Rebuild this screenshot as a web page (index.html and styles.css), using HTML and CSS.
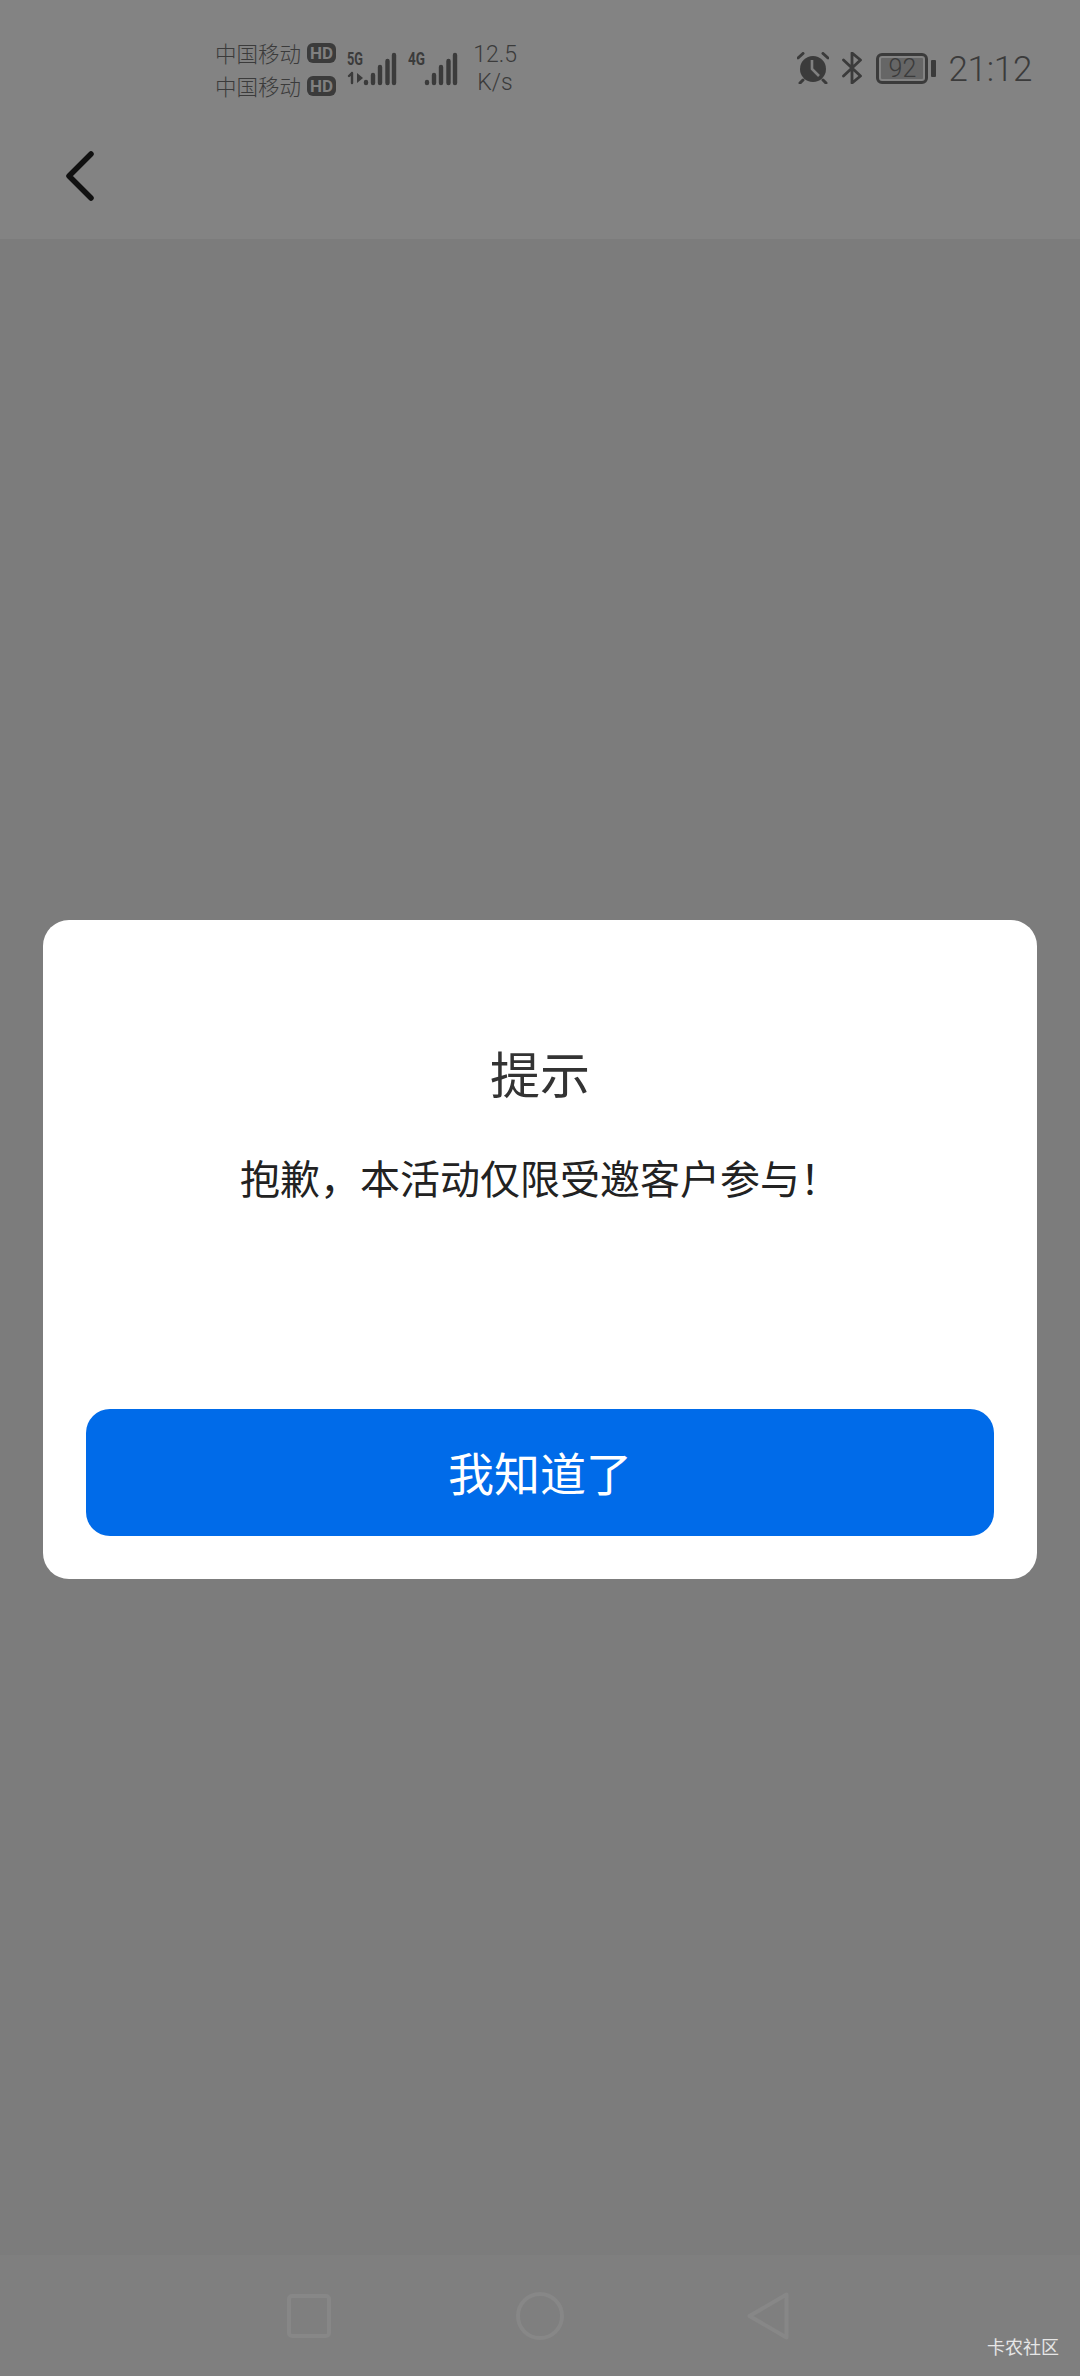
FILE: index.html
```html
<!DOCTYPE html>
<html lang="zh-CN">
<head>
<meta charset="utf-8">
<title>提示</title>
<link rel="stylesheet" href="styles.css">
</head>
<body>
<div class="page">
  <header class="top">
    <div class="status">
      <div class="status-left">
        <div class="carriers">
          <div class="carrier"><span>中国移动</span><b class="hd">HD</b></div>
          <div class="carrier"><span>中国移动</span><b class="hd">HD</b></div>
        </div>
        <svg class="signal-a" width="52" height="42" viewBox="0 -6 52 42">
          <text x="0" y="15" class="net" textLength="16" lengthAdjust="spacingAndGlyphs">5G</text>
          <g fill="none" stroke="#3b3b3b" stroke-width="2.4" stroke-linecap="round" stroke-linejoin="round">
            <path d="M5 23V33M2 26L5 23"/>
          </g>
          <path d="M10 23L16 28L10 33Z" fill="#3b3b3b"/>
          <g stroke="#3b3b3b" stroke-width="4.4" stroke-linecap="round">
            <path d="M19 32V33M26 25V33M33 17V33M40.5 11V33M47 5V33"/>
          </g>
        </svg>
        <svg class="signal-b" width="52" height="42" viewBox="0 -6 52 42">
          <text x="0" y="15" class="net" textLength="17" lengthAdjust="spacingAndGlyphs">4G</text>
          <g stroke="#3b3b3b" stroke-width="4.4" stroke-linecap="round">
            <path d="M19 32V33M26 25V33M33 17V33M40.5 11V33M47 5V33"/>
          </g>
        </svg>
        <div class="speed"><span>12.5</span><span>K/s</span></div>
      </div>
      <div class="status-right">
        <svg class="alarm" width="32" height="32" viewBox="0 0 32 32">
          <circle cx="16" cy="17" r="13" fill="#3b3b3b"/>
          <path d="M15 8V17L22 24" fill="none" stroke="#808080" stroke-width="2.6"/>
          <path d="M1 6L6 1.5M31 6L26 1.5M6 28L3 31M26 28L29 31" stroke="#3b3b3b" stroke-width="3" stroke-linecap="round" fill="none"/>
        </svg>
        <svg class="bt" width="21" height="32" viewBox="0 0 21 32">
          <path d="M1.5 8L18.5 24L10 31V1L18.5 8L1.5 24" fill="none" stroke="#3b3b3b" stroke-width="2.8" stroke-linecap="round" stroke-linejoin="round"/>
        </svg>
        <div class="battery-wrap">
          <div class="battery"><span class="level">92</span></div>
          <i class="cap"></i>
        </div>
        <span class="time">21:12</span>
      </div>
    </div>
    <div class="nav">
      <svg width="32" height="50" viewBox="0 0 32 50">
        <path d="M27 3L5 25L27 47" fill="none" stroke="#111" stroke-width="5.5" stroke-linecap="round" stroke-linejoin="round"/>
      </svg>
    </div>
  </header>
  <main class="body"></main>
  <footer class="sysnav">
    <svg class="key-square" width="44" height="44" viewBox="0 0 44 44"><rect x="2" y="2" width="40" height="40" rx="3" fill="none" stroke="#878787" stroke-width="4"/></svg>
    <svg class="key-circle" width="48" height="48" viewBox="0 0 48 48"><circle cx="24" cy="24" r="22" fill="none" stroke="#878787" stroke-width="4"/></svg>
    <svg class="key-back" width="42" height="48" viewBox="0 0 42 48"><path d="M39.5 2.5V45.5L2.5 24Z" fill="none" stroke="#878787" stroke-width="4" stroke-linejoin="round"/></svg>
  </footer>
  <div class="dialog">
    <h1 class="title">提示</h1>
    <p class="message">抱歉，本活动仅限受邀客户参与！</p>
    <button class="confirm">我知道了</button>
  </div>
  <span class="watermark">卡农社区</span>
</div>
</body>
</html>
```
FILE: styles.css
```css
* { box-sizing: border-box; }
html, body { margin: 0; padding: 0; }
body { font-family: "Noto Sans CJK SC", "Noto Sans", sans-serif; background: #7c7c7c; }
.page { position: relative; width: 1080px; height: 2376px; display: flex; flex-direction: column; background: #7c7c7c; overflow: hidden; }
.top { height: 239px; background: #838383; flex: none; }
.status { height: 130px; display: flex; justify-content: space-between; padding: 36px 48px 0 215px; color: #3b3b3b; }
.status-left { display: flex; align-items: flex-start; }
.carriers { display: flex; flex-direction: column; }
.carrier { display: flex; align-items: center; gap: 6px; height: 33px; font-size: 21.5px; font-weight: 300; line-height: 33px; }
.hd { display: inline-block; width: 29px; height: 20px; border-radius: 6px; background: #3b3b3b; color: #808080; font: 700 17px/20px "Roboto", sans-serif; text-align: center; }
.signal-a { margin: 8px 0 0 11px; flex: none; }
.signal-b { margin: 8px 0 0 9px; flex: none; }
.net { font: 700 18px "Roboto", sans-serif; fill: #3b3b3b; }
.speed { display: flex; flex-direction: column; align-items: center; width: 48px; margin: 5px 0 0 11px; font: 300 23px/28px "Roboto", sans-serif; }
.status-right { display: flex; align-items: center; height: 40px; margin-top: 12px; }
.alarm { margin-right: 13px; }
.bt { margin-right: 13px; }
.battery-wrap { display: flex; align-items: center; margin-right: 12px; }
.battery { width: 52px; height: 31px; padding: 2px; border: 3px solid #3b3b3b; border-radius: 6px; }
.level { display: block; width: 100%; height: 100%; background: #666; font: 300 25px/21px "Roboto", sans-serif; text-align: center; border-radius: 1px; }
.cap { width: 5px; height: 17px; margin-left: 3px; background: #3b3b3b; border-radius: 1px; }
.time { padding-top: 3px; font: 300 35px/40px "Roboto", sans-serif; letter-spacing: -0.3px; }
.nav { height: 109px; padding: 21px 0 0 64px; }
.nav svg { display: block; }
.body { flex: 1; }
.sysnav { height: 121px; flex: none; display: flex; align-items: flex-start; padding: 37px 0 0 287px; background: #7f7f7f; }
.key-square { margin-top: 2px; }
.key-circle { margin-left: 185px; }
.key-back { margin-left: 183px; }
.dialog { position: absolute; left: 43px; top: 920px; width: 994px; height: 659px; background: #fff; border-radius: 26px; padding: 0 43px; display: flex; flex-direction: column; align-items: center; }
.title { margin: 117px 0 0; font-size: 50px; line-height: 70px; font-weight: 400; color: #333; }
.message { margin: 40px 0 0; font-size: 40px; line-height: 60px; font-weight: 400; color: #222; }
.confirm { margin-top: auto; margin-bottom: 43px; width: 908px; height: 127px; padding: 0 0 4px; border: 0; border-radius: 24px; background: #006be9; color: #fff; font-family: inherit; font-size: 46px; font-weight: 400; }
.watermark { position: absolute; right: 21px; bottom: 18px; font-size: 18px; line-height: 24px; color: #e6e6e6; font-weight: 400; }
```
